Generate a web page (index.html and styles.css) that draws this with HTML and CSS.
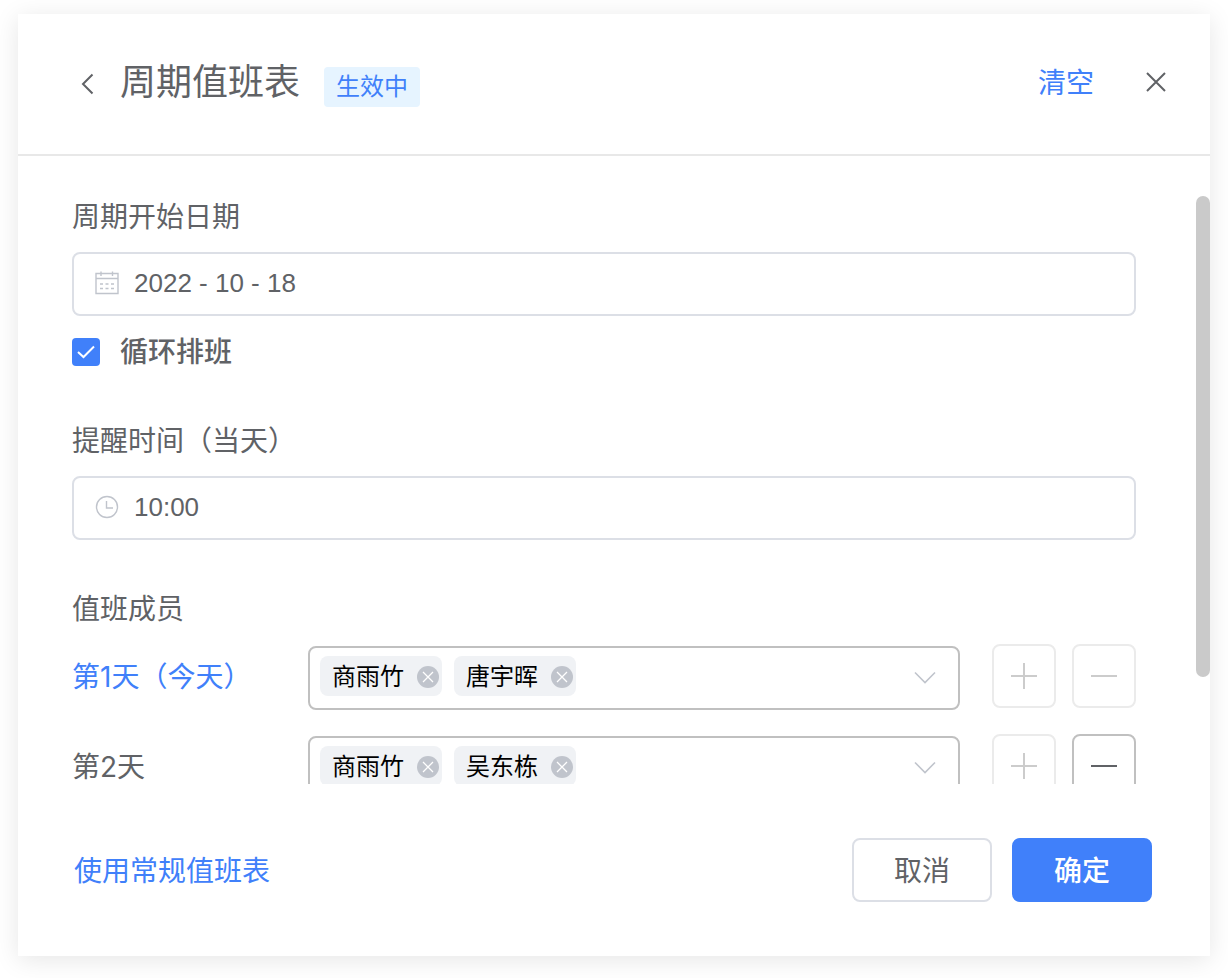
FILE: index.html
```html
<!DOCTYPE html>
<html lang="zh-CN">
<head>
    <meta charset="UTF-8">
    <meta name="viewport" content="width=device-width, initial-scale=1.0">
    <title>周期值班表</title>
    <link rel="stylesheet" href="styles.css">
</head>
<body>
    <main class="dialog">
        <header class="dialog-header">
            <button class="icon-btn" type="button" aria-label="返回">
                <svg width="28" height="28" viewBox="0 0 28 28" fill="none" stroke="currentColor" stroke-width="2">
                    <path d="M18.5 6.5 L9 16 L18.5 25.5" />
                </svg>
            </button>
            <div class="heading">
                <h1>周期值班表</h1>
                <span class="status">生效中</span>
            </div>
            <button class="text-btn" type="button">清空</button>
            <button class="icon-btn close" type="button" aria-label="关闭">
                <svg width="28" height="28" viewBox="0 0 28 28" fill="none" stroke="currentColor" stroke-width="2">
                    <path d="M5 5 L23 23 M23 5 L5 23" />
                </svg>
            </button>
        </header>

        <div class="dialog-content">
            <form class="dialog-body" id="duty-form">
                <label class="label" for="start-date">周期开始日期</label>
                <div class="input-box">
                    <svg width="24" height="24" viewBox="0 0 24 24" fill="none" stroke="currentColor" stroke-width="1.4">
                        <path d="M1 2.5 H23 V22.5 H1 Z M1 7.5 H23 M6 0.5 V5 M17.5 0.5 V5" />
                        <path d="M5 13 H8 M10.5 13 H13.5 M16 13 H19 M5 17.5 H8 M10.5 17.5 H13.5 M16 17.5 H19" />
                    </svg>
                    <input id="start-date" type="text" value="2022 - 10 - 18">
                </div>

                <div class="check-row">
                    <span class="checkbox">
                        <input id="loop" type="checkbox" checked>
                        <svg width="28" height="28" viewBox="0 0 28 28" fill="none" stroke="#fff" stroke-width="2">
                            <path d="M6 14 L11.5 19 L22 8.5" />
                        </svg>
                    </span>
                    <label for="loop">循环排班</label>
                </div>

                <label class="label" for="remind-time">提醒时间（当天）</label>
                <div class="input-box">
                    <svg width="24" height="24" viewBox="0 0 24 24" fill="none" stroke="currentColor" stroke-width="1.4">
                        <circle cx="12" cy="12" r="10.5" />
                        <path d="M11.5 6 V13 H18" />
                    </svg>
                    <input id="remind-time" type="text" value="10:00">
                </div>

                <h2 class="label members-title">值班成员</h2>
                <div class="member-row">
                    <label class="day today" for="day-1">第1天（今天）</label>
                    <div class="picker">
                        <span class="tag">商雨竹
                            <button type="button" aria-label="移除商雨竹">
                                <svg width="22" height="22" viewBox="0 0 22 22" stroke="#fff" stroke-width="1.3">
                                    <path d="M6 6 L16 16 M16 6 L6 16" />
                                </svg>
                            </button>
                        </span>
                        <span class="tag">唐宇晖
                            <button type="button" aria-label="移除唐宇晖">
                                <svg width="22" height="22" viewBox="0 0 22 22" stroke="#fff" stroke-width="1.3">
                                    <path d="M6 6 L16 16 M16 6 L6 16" />
                                </svg>
                            </button>
                        </span>
                        <select id="day-1"><option value=""></option></select>
                        <svg class="arrow" width="22" height="44" viewBox="0 0 22 44" fill="none" stroke="currentColor" stroke-width="1.6">
                            <path d="M1 16.5 L11 26.5 L21 16.5" />
                        </svg>
                    </div>
                    <button class="square-btn" type="button" aria-label="添加一天" disabled>
                        <svg width="26" height="26" viewBox="0 0 26 26" stroke="currentColor" stroke-width="2">
                            <path d="M0 13 H26 M13 0 V26" />
                        </svg>
                    </button>
                    <button class="square-btn" type="button" aria-label="删除一天" disabled>
                        <svg width="26" height="26" viewBox="0 0 26 26" stroke="currentColor" stroke-width="2">
                            <path d="M0 13 H26" />
                        </svg>
                    </button>
                </div>
                <div class="member-row">
                    <label class="day" for="day-2">第2天</label>
                    <div class="picker">
                        <span class="tag">商雨竹
                            <button type="button" aria-label="移除商雨竹">
                                <svg width="22" height="22" viewBox="0 0 22 22" stroke="#fff" stroke-width="1.3">
                                    <path d="M6 6 L16 16 M16 6 L6 16" />
                                </svg>
                            </button>
                        </span>
                        <span class="tag">吴东栋
                            <button type="button" aria-label="移除吴东栋">
                                <svg width="22" height="22" viewBox="0 0 22 22" stroke="#fff" stroke-width="1.3">
                                    <path d="M6 6 L16 16 M16 6 L6 16" />
                                </svg>
                            </button>
                        </span>
                        <select id="day-2"><option value=""></option></select>
                        <svg class="arrow" width="22" height="44" viewBox="0 0 22 44" fill="none" stroke="currentColor" stroke-width="1.6">
                            <path d="M1 16.5 L11 26.5 L21 16.5" />
                        </svg>
                    </div>
                    <button class="square-btn" type="button" aria-label="添加一天" disabled>
                        <svg width="26" height="26" viewBox="0 0 26 26" stroke="currentColor" stroke-width="2">
                            <path d="M0 13 H26 M13 0 V26" />
                        </svg>
                    </button>
                    <button class="square-btn" type="button" aria-label="删除一天">
                        <svg width="26" height="26" viewBox="0 0 26 26" stroke="currentColor" stroke-width="2">
                            <path d="M0 13 H26" />
                        </svg>
                    </button>
                </div>
            </form>
            <div class="scroll-thumb"></div>
        </div>

        <footer class="dialog-footer">
            <a href="#">使用常规值班表</a>
            <button class="btn" type="button">取消</button>
            <button class="btn primary" type="submit" form="duty-form">确定</button>
        </footer>
    </main>
</body>
</html>
```
FILE: styles.css
```css
* {
    box-sizing: border-box;
}

body {
    margin: 0;
    height: 100vh;
    padding: 14px 18px 22px;
    display: flex;
    overflow: hidden;
    background: #fff;
    color: #606266;
    font-family: Inter, "Noto Sans CJK SC", sans-serif;
    font-size: 28px;
    line-height: 40px;
}

button,
input,
select {
    font: inherit;
    color: inherit;
    margin: 0;
    padding: 0;
    border: none;
    background: none;
}

svg {
    display: block;
    flex: none;
}

.dialog {
    flex: 1;
    min-width: 0;
    display: flex;
    flex-direction: column;
    background: #fff;
    box-shadow: 0 4px 24px rgba(0, 0, 0, 0.1);
}

/* Header */
.dialog-header {
    display: flex;
    align-items: center;
    padding: 40px 40px 44px 56px;
    border-bottom: 2px solid #e8e8e8;
}

.heading {
    flex: 1;
    display: flex;
    align-items: baseline;
    gap: 24px;
    margin-left: 18px;
}

h1 {
    margin: 0;
    font-size: 36px;
    font-weight: 400;
    line-height: 56px;
}

.status {
    padding: 0 12px;
    border-radius: 4px;
    background: #e6f4ff;
    color: #4080fa;
    font-size: 24px;
}

.text-btn {
    padding-top: 2px;
    color: #4080fa;
}

.close {
    margin-left: 48px;
}

/* Scrolling form */
.dialog-content {
    flex: 1;
    min-height: 0;
    position: relative;
    display: flex;
}

.dialog-body {
    flex: 1;
    padding: 40px 74px 40px 54px;
    overflow-y: auto;
    scrollbar-width: none;
}

.scroll-thumb {
    position: absolute;
    top: 40px;
    right: 0;
    width: 14px;
    bottom: 17%;
    border-radius: 7px;
    background: #cacaca;
}

.label {
    display: block;
    margin: 0 0 14px;
    font-size: 28px;
    font-weight: 400;
    line-height: 42px;
}

.input-box {
    display: flex;
    align-items: center;
    gap: 15px;
    height: 64px;
    padding: 0 21px 2px;
    border: 2px solid #dcdfe6;
    border-radius: 8px;
    color: #c0c4cc;
}

.input-box input {
    flex: 1;
    min-width: 0;
    color: #606266;
    font-family: "Liberation Sans", sans-serif;
    font-size: 26px;
}

.check-row {
    display: flex;
    align-items: center;
    gap: 20px;
    margin: 22px 0 54px;
    line-height: 28px;
    font-weight: 500;
}

.checkbox {
    display: grid;
}

.checkbox input,
.checkbox svg {
    grid-area: 1 / 1;
}

.checkbox input {
    appearance: none;
    width: 28px;
    height: 28px;
    border-radius: 4px;
    background: #4080fa;
}

.checkbox svg {
    pointer-events: none;
}

.members-title {
    margin-top: 48px;
}

/* Member rows */
.member-row {
    display: flex;
    gap: 16px;
    margin-bottom: 24px;
}

.day {
    width: 220px;
    line-height: 66px;
}

.today {
    color: #4080fa;
}

.picker {
    flex: 1;
    display: flex;
    gap: 12px;
    height: 64px;
    margin: 2px 16px 0 0;
    padding: 8px 22px 8px 10px;
    border: 2px solid #c0c0c0;
    border-radius: 8px;
}

.picker select {
    flex: 1;
    min-width: 0;
    appearance: none;
}

.arrow {
    color: #c0c4cc;
}

.tag {
    display: flex;
    align-items: center;
    gap: 13px;
    height: 40px;
    padding: 2px 3px 0 12px;
    border-radius: 8px;
    background: #f0f2f5;
    color: #000;
    font-size: 24px;
}

.tag button {
    border-radius: 50%;
    background: #c0c4cc;
}

.square-btn {
    display: grid;
    place-items: center;
    width: 64px;
    height: 64px;
    border: 2px solid #c0c0c0;
    border-radius: 8px;
}

.square-btn:disabled {
    border-color: #ebebeb;
    color: #ccc;
}

/* Footer */
.dialog-footer {
    display: flex;
    align-items: center;
    gap: 20px;
    padding: 54px 58px 54px 56px;
}

.dialog-footer a {
    margin-right: auto;
    padding-top: 2px;
    color: #4080fa;
    text-decoration: none;
}

.btn {
    width: 140px;
    height: 64px;
    padding-top: 2px;
    border: 2px solid #dcdfe6;
    border-radius: 8px;
}

.primary {
    border-color: #4080fa;
    background: #4080fa;
    color: #fff;
    font-weight: 500;
}
```
